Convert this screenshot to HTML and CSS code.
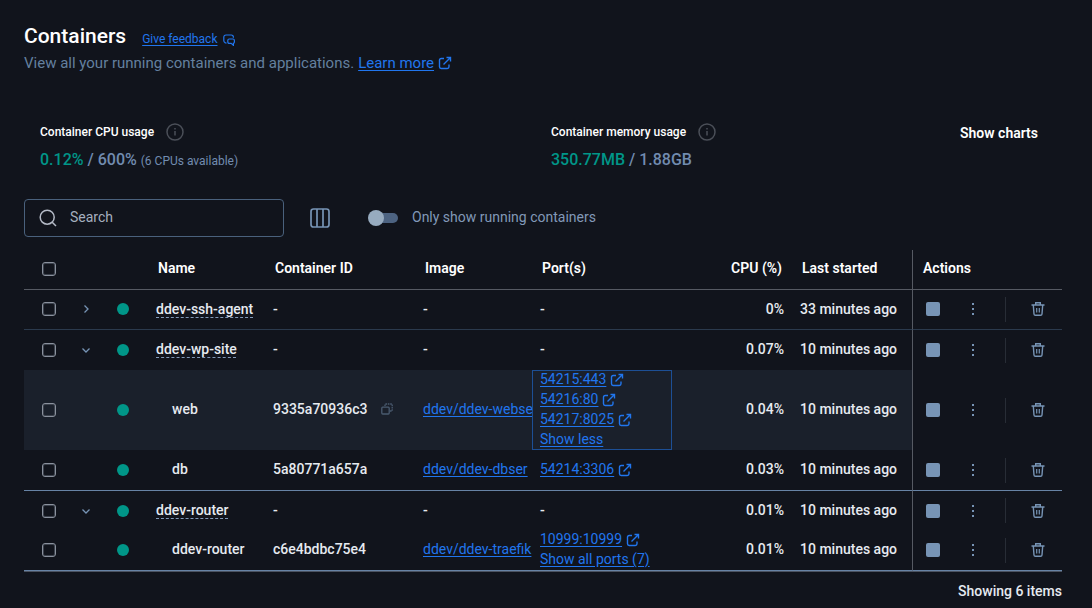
FILE: index.html
```
<!DOCTYPE html>
<html lang="en">
<head>
    <meta charset="UTF-8">
    <meta name="viewport" content="width=device-width, initial-scale=1.0">
    <title>Containers</title>
    <link rel="stylesheet" href="styles.css">
</head>
<body>
    <!-- Shared icons -->
    <svg class="icon-defs" aria-hidden="true">
        <symbol id="icon-external" viewBox="0 0 14 14">
            <path d="M6 2.5H3.2Q1.5 2.5 1.5 4.2V10.8Q1.5 12.5 3.2 12.5H9.3Q11 12.5 11 10.8V8.5M5.5 8.5L12 2M8.5 1.5H12.5V5.5" fill="none" stroke="currentColor" stroke-width="1.4"/>
        </symbol>
        <symbol id="icon-info" viewBox="0 0 18 18">
            <circle cx="9" cy="9" r="8" fill="none" stroke="currentColor" stroke-width="1.5"/>
            <path d="M9 8V12.5M9 5V6.5" stroke="currentColor" stroke-width="1.5"/>
        </symbol>
        <symbol id="icon-right" viewBox="0 0 10 10">
            <path d="M3.5 1.5L7 5L3.5 8.5" fill="none" stroke="currentColor" stroke-width="1.3"/>
        </symbol>
        <symbol id="icon-down" viewBox="0 0 10 10">
            <path d="M1.5 3.5L5 7L8.5 3.5" fill="none" stroke="currentColor" stroke-width="1.3"/>
        </symbol>
        <symbol id="icon-stop" viewBox="0 0 14 14">
            <rect width="14" height="14" rx="2" fill="currentColor"/>
        </symbol>
        <symbol id="icon-more" viewBox="0 0 14 14">
            <path d="M6 1h2v2H6zM6 6h2v2H6zM6 11h2v2H6z" fill="currentColor"/>
        </symbol>
        <symbol id="icon-trash" viewBox="0 0 14 14">
            <path d="M0.5 3H13.5M4.7 2.7V0.8H9.3V2.7M2.3 3L3 12Q3.1 13.3 4.4 13.3H9.6Q10.9 13.3 11 12L11.7 3" fill="none" stroke="currentColor" stroke-width="1.4"/>
            <path d="M5.7 6V10.5M8.3 6V10.5" stroke="currentColor" stroke-width="1.2"/>
        </symbol>
    </svg>

    <main class="page">
        <header class="page-header">
            <div class="title-row">
                <h1>Containers</h1>
                <a href="#" class="feedback">Give feedback</a>
                <svg class="icon-feedback" viewBox="0 0 12 12" aria-hidden="true">
                    <path d="M3.5 9.2L2 8.6Q0.8 8 0.8 6.5V3.2Q0.8 1 3 1H8.2Q10.4 1 10.4 3.2V3.8" fill="none" stroke="currentColor" stroke-width="1.2"/>
                    <path d="M6.2 5H10Q11.4 5 11.4 6.4V8Q11.4 9.1 10.4 9.3V11.4L8.2 9.4H6.2Q4.8 9.4 4.8 8V6.4Q4.8 5 6.2 5Z" fill="none" stroke="currentColor" stroke-width="1.2"/>
                </svg>
            </div>
            <p class="subtitle">View all your running containers and applications. <a href="#">Learn more</a><svg class="icon-link" aria-hidden="true"><use href="#icon-external"/></svg></p>
        </header>

        <!-- Usage summary -->
        <section class="stats">
            <div class="stat">
                <div class="stat-label">Container CPU usage <svg class="icon-info" aria-hidden="true"><use href="#icon-info"/></svg></div>
                <div class="stat-value"><span class="used">0.12%</span> / 600% <small>(6 CPUs available)</small></div>
            </div>
            <div class="stat">
                <div class="stat-label">Container memory usage <svg class="icon-info" aria-hidden="true"><use href="#icon-info"/></svg></div>
                <div class="stat-value"><span class="used">350.77MB</span> / 1.88GB</div>
            </div>
            <button type="button" class="show-charts">Show charts</button>
        </section>

        <!-- Toolbar -->
        <div class="toolbar">
            <div class="search">
                <svg class="icon-search" viewBox="0 0 18 18" aria-hidden="true">
                    <circle cx="8.2" cy="8.2" r="7" fill="none" stroke="currentColor" stroke-width="1.5"/>
                    <path d="M13.2 13.2L17 17" stroke="currentColor" stroke-width="1.5"/>
                </svg>
                <input type="text" placeholder="Search" aria-label="Search">
            </div>
            <button type="button" class="columns-button" aria-label="Columns">
                <svg viewBox="0 0 20 20" aria-hidden="true">
                    <path d="M3.5 1H16.5Q19 1 19 3.5V16.5Q19 19 16.5 19H3.5Q1 19 1 16.5V3.5Q1 1 3.5 1ZM7 1V19M13 1V19" fill="none" stroke="currentColor" stroke-width="1.7"/>
                </svg>
            </button>
            <label class="running-only"><input type="checkbox" role="switch" class="switch"> <span>Only show running containers</span></label>
        </div>

        <table class="containers">
            <colgroup>
                <col class="col-check">
                <col class="col-expand">
                <col class="col-status">
                <col class="col-name">
                <col class="col-id">
                <col class="col-image">
                <col class="col-ports">
                <col class="col-cpu">
                <col class="col-started">
                <col class="col-actions">
            </colgroup>
            <thead>
                <tr>
                    <th class="center"><input type="checkbox" class="check" aria-label="Select all"></th>
                    <th></th>
                    <th></th>
                    <th>Name</th>
                    <th>Container ID</th>
                    <th>Image</th>
                    <th>Port(s)</th>
                    <th class="cpu">CPU (%)</th>
                    <th>Last started</th>
                    <th class="actions-cell">Actions</th>
                </tr>
            </thead>
            <tbody>
                <tr class="line">
                    <td class="center"><input type="checkbox" class="check" aria-label="Select ddev-ssh-agent"></td>
                    <td class="center"><button type="button" class="expand" aria-label="Expand"><svg><use href="#icon-right"/></svg></button></td>
                    <td class="center"><span class="dot"></span></td>
                    <td><span class="group-name">ddev-ssh-agent</span></td>
                    <td>-</td>
                    <td>-</td>
                    <td>-</td>
                    <td class="cpu">0%</td>
                    <td>33 minutes ago</td>
                    <td class="actions-cell">
                        <div class="actions">
                            <button type="button" aria-label="Stop"><svg><use href="#icon-stop"/></svg></button>
                            <button type="button" aria-label="More"><svg><use href="#icon-more"/></svg></button>
                            <span class="divider"></span>
                            <button type="button" aria-label="Delete"><svg><use href="#icon-trash"/></svg></button>
                        </div>
                    </td>
                </tr>
                <tr>
                    <td class="center"><input type="checkbox" class="check" aria-label="Select ddev-wp-site"></td>
                    <td class="center"><button type="button" class="expand" aria-label="Collapse"><svg><use href="#icon-down"/></svg></button></td>
                    <td class="center"><span class="dot"></span></td>
                    <td><span class="group-name">ddev-wp-site</span></td>
                    <td>-</td>
                    <td>-</td>
                    <td>-</td>
                    <td class="cpu">0.07%</td>
                    <td>10 minutes ago</td>
                    <td class="actions-cell">
                        <div class="actions">
                            <button type="button" aria-label="Stop"><svg><use href="#icon-stop"/></svg></button>
                            <button type="button" aria-label="More"><svg><use href="#icon-more"/></svg></button>
                            <span class="divider"></span>
                            <button type="button" aria-label="Delete"><svg><use href="#icon-trash"/></svg></button>
                        </div>
                    </td>
                </tr>
                <tr class="hovered">
                    <td class="center"><input type="checkbox" class="check" aria-label="Select web"></td>
                    <td></td>
                    <td class="center"><span class="dot"></span></td>
                    <td class="child">web</td>
                    <td><span class="with-icon">9335a70936c3
                        <button type="button" class="copy" aria-label="Copy">
                            <svg viewBox="0 0 12 12" aria-hidden="true">
                                <path d="M1.7 4.2H7.3Q8.2 4.2 8.2 5.2V10Q8.2 11 7.3 11H1.7Q0.8 11 0.8 10V5.2Q0.8 4.2 1.7 4.2Z" fill="none" stroke="currentColor" stroke-width="1.3"/>
                                <path d="M4 3V1H11.2V8H9" fill="none" stroke="currentColor" stroke-width="1.3" stroke-dasharray="1.6 0.8"/>
                            </svg>
                        </button></span></td>
                    <td class="image"><a href="#">ddev/ddev-webse</a></td>
                    <td class="ports selected">
                        <div><a href="#">54215:443</a><svg class="icon-link"><use href="#icon-external"/></svg></div>
                        <div><a href="#">54216:80</a><svg class="icon-link"><use href="#icon-external"/></svg></div>
                        <div><a href="#">54217:8025</a><svg class="icon-link"><use href="#icon-external"/></svg></div>
                        <div><a href="#">Show less</a></div>
                    </td>
                    <td class="cpu">0.04%</td>
                    <td>10 minutes ago</td>
                    <td class="actions-cell">
                        <div class="actions">
                            <button type="button" aria-label="Stop"><svg><use href="#icon-stop"/></svg></button>
                            <button type="button" aria-label="More"><svg><use href="#icon-more"/></svg></button>
                            <span class="divider"></span>
                            <button type="button" aria-label="Delete"><svg><use href="#icon-trash"/></svg></button>
                        </div>
                    </td>
                </tr>
                <tr class="line-strong">
                    <td class="center"><input type="checkbox" class="check" aria-label="Select db"></td>
                    <td></td>
                    <td class="center"><span class="dot"></span></td>
                    <td class="child">db</td>
                    <td>5a80771a657a</td>
                    <td class="image"><a href="#">ddev/ddev-dbser</a></td>
                    <td class="ports"><div><a href="#">54214:3306</a><svg class="icon-link"><use href="#icon-external"/></svg></div></td>
                    <td class="cpu">0.03%</td>
                    <td>10 minutes ago</td>
                    <td class="actions-cell">
                        <div class="actions">
                            <button type="button" aria-label="Stop"><svg><use href="#icon-stop"/></svg></button>
                            <button type="button" aria-label="More"><svg><use href="#icon-more"/></svg></button>
                            <span class="divider"></span>
                            <button type="button" aria-label="Delete"><svg><use href="#icon-trash"/></svg></button>
                        </div>
                    </td>
                </tr>
                <tr class="after-line">
                    <td class="center"><input type="checkbox" class="check" aria-label="Select ddev-router group"></td>
                    <td class="center"><button type="button" class="expand" aria-label="Collapse"><svg><use href="#icon-down"/></svg></button></td>
                    <td class="center"><span class="dot"></span></td>
                    <td><span class="group-name">ddev-router</span></td>
                    <td>-</td>
                    <td>-</td>
                    <td>-</td>
                    <td class="cpu">0.01%</td>
                    <td>10 minutes ago</td>
                    <td class="actions-cell">
                        <div class="actions">
                            <button type="button" aria-label="Stop"><svg><use href="#icon-stop"/></svg></button>
                            <button type="button" aria-label="More"><svg><use href="#icon-more"/></svg></button>
                            <span class="divider"></span>
                            <button type="button" aria-label="Delete"><svg><use href="#icon-trash"/></svg></button>
                        </div>
                    </td>
                </tr>
                <tr class="line-strong">
                    <td class="center"><input type="checkbox" class="check" aria-label="Select ddev-router"></td>
                    <td></td>
                    <td class="center"><span class="dot"></span></td>
                    <td class="child">ddev-router</td>
                    <td>c6e4bdbc75e4</td>
                    <td class="image"><a href="#">ddev/ddev-traefik</a></td>
                    <td class="ports">
                        <div><a href="#">10999:10999</a><svg class="icon-link"><use href="#icon-external"/></svg></div>
                        <div><a href="#">Show all ports (7)</a></div>
                    </td>
                    <td class="cpu">0.01%</td>
                    <td>10 minutes ago</td>
                    <td class="actions-cell">
                        <div class="actions">
                            <button type="button" aria-label="Stop"><svg><use href="#icon-stop"/></svg></button>
                            <button type="button" aria-label="More"><svg><use href="#icon-more"/></svg></button>
                            <span class="divider"></span>
                            <button type="button" aria-label="Delete"><svg><use href="#icon-trash"/></svg></button>
                        </div>
                    </td>
                </tr>
            </tbody>
        </table>
        <footer class="table-footer">Showing 6 items</footer>
    </main>
</body>
</html>
```
FILE: styles.css
```
* {
    box-sizing: border-box;
}
body {
    margin: 0;
    background: #11141c;
    color: #e6eaf0;
    font-family: Roboto, "Liberation Sans", sans-serif;
    font-size: 14px;
    line-height: 20px;
}
a {
    color: #2176ee;
    text-decoration: underline;
    text-underline-offset: 2px;
}
button {
    padding: 0;
    border: 0;
    background: none;
    color: inherit;
    font: inherit;
    cursor: pointer;
}
svg {
    display: block;
}
.icon-defs {
    display: none;
}
.page {
    padding: 24px 30px 0 24px;
}
.title-row {
    display: flex;
    align-items: baseline;
}
h1 {
    margin: 0 16px 0 0;
    font-size: 21px;
    line-height: 24px;
    font-weight: 500;
    color: #fff;
}
.feedback {
    font-size: 12px;
}
.icon-feedback {
    align-self: flex-end;
    width: 12px;
    height: 12px;
    margin: 0 0 3px 6px;
    color: #2176ee;
}
.subtitle {
    display: flex;
    align-items: center;
    gap: 4px;
    margin: 4px 0 0;
    font-size: 15px;
    color: #64809f;
}
.icon-link {
    width: 14px;
    height: 14px;
    color: #2176ee;
}

/* Usage summary */
.stats {
    position: relative;
    display: grid;
    grid-template-columns: 1fr 1fr;
    margin-top: 48px;
    padding-left: 16px;
}
.stat-label {
    display: flex;
    align-items: center;
    gap: 12px;
    height: 22px;
    font-size: 12px;
    font-weight: 500;
    color: #fff;
}
.icon-info {
    width: 18px;
    height: 18px;
    color: #4b4f58;
}
.stat-value {
    margin-top: 7px;
    font-size: 16px;
    font-weight: 500;
    color: #718cb0;
}
.stat-value .used {
    color: #009688;
}
.stat-value small {
    font-size: 12px;
    font-weight: 400;
}
.show-charts {
    position: absolute;
    top: 2px;
    right: 24px;
    font-weight: 600;
    color: #fff;
}

/* Toolbar */
.toolbar {
    display: flex;
    align-items: center;
    margin-top: 28px;
}
.search {
    display: flex;
    align-items: center;
    gap: 13px;
    width: 260px;
    height: 38px;
    padding: 0 14px;
    border: 1px solid #4a617c;
    border-radius: 4px;
}
.icon-search {
    width: 18px;
    height: 18px;
    color: #b4bac6;
}
.search input {
    flex: 1;
    min-width: 0;
    padding: 0 0 2px;
    border: 0;
    outline: 0;
    background: none;
    color: #e6eaf0;
    font: inherit;
}
.search input::placeholder {
    color: #a5afbf;
    opacity: 1;
}
.columns-button {
    margin-left: 26px;
    color: #7794b5;
}
.columns-button svg {
    width: 20px;
    height: 20px;
}
.running-only {
    display: flex;
    align-items: center;
    gap: 14px;
    margin-left: 38px;
    color: #8299b8;
}
.running-only span {
    padding-bottom: 2px;
}
.switch {
    appearance: none;
    position: relative;
    width: 30px;
    height: 16px;
    margin: 0;
}
.switch::before {
    content: "";
    position: absolute;
    top: 3px;
    left: 2px;
    right: 0;
    height: 10px;
    border-radius: 5px;
    background: #4d6381;
}
.switch::after {
    content: "";
    position: absolute;
    top: 0;
    left: 0;
    width: 16px;
    height: 16px;
    border-radius: 50%;
    background: #97abbf;
}

/* Table */
.containers {
    width: 100%;
    margin-top: 13px;
    table-layout: fixed;
    border-collapse: separate;
    border-spacing: 0;
}
.col-check, .col-status {
    width: 50px;
}
.col-expand {
    width: 24px;
}
.col-id, .col-actions {
    width: 150px;
}
.col-image {
    width: 117px;
}
.col-ports {
    width: 140px;
}
.col-cpu, .col-started {
    width: 120px;
}
th, td {
    height: 40px;
    padding: 0 8px 2px;
    text-align: left;
    white-space: nowrap;
    font-weight: 500;
}
th {
    padding: 0 10px 3px;
    border-bottom: 1px solid #565a63;
    font-weight: 600;
    color: #fff;
}
.center {
    padding: 0;
    text-align: center;
}
th.center, .line .center {
    padding-bottom: 1px;
}
td.actions-cell {
    padding-bottom: 0;
}
.line td.actions-cell {
    padding-bottom: 1px;
}
.cpu {
    text-align: right;
}
.line td {
    border-bottom: 1px solid #2b3a4d;
}
.line-strong td {
    height: 41px;
    border-bottom: 1px solid #6783a5;
}
.after-line td {
    height: 39px;
}
.hovered td:not(.actions-cell) {
    background: #1a202b;
}
.check {
    appearance: none;
    display: block;
    width: 14px;
    height: 14px;
    margin: 0 auto;
    border: 1px solid #8a919d;
    border-radius: 3px;
    box-shadow: inset 0 0 0 1px #3c424d;
}
.expand {
    display: block;
    margin: 0 auto;
    color: #7794b5;
}
.expand svg {
    width: 10px;
    height: 10px;
}
.dot {
    display: block;
    width: 12px;
    height: 12px;
    margin: 0 auto;
    border-radius: 50%;
    background: #009688;
}
.group-name {
    text-decoration: underline dashed #8299b8 1px;
    text-underline-offset: 3px;
}
.child {
    padding-left: 24px;
}
.with-icon {
    display: flex;
    align-items: center;
    gap: 14px;
}
.copy {
    color: #4a5b70;
}
.copy svg {
    width: 12px;
    height: 12px;
}
.image {
    padding-right: 0;
    overflow: hidden;
    font-weight: 400;
}
td.ports {
    padding-bottom: 0;
    font-weight: 400;
}
.ports div {
    display: flex;
    gap: 4px;
    height: 20px;
    line-height: 18px;
}
.ports .icon-link {
    margin-top: 3px;
}
.selected {
    outline: 1px solid #1d4f95;
    outline-offset: -1px;
}
.actions-cell {
    border-left: 1px solid #565a63;
}
.actions {
    display: flex;
    align-items: center;
    gap: 16px;
    color: #7794b5;
}
.actions button {
    display: flex;
    justify-content: center;
    width: 24px;
}
.actions svg {
    width: 14px;
    height: 14px;
}
.divider {
    width: 1px;
    height: 25px;
    margin: 0 4px;
    background: #282d36;
}
.table-footer {
    padding: 9px 0;
    border-top: 1px solid #4b5361;
    text-align: right;
    font-weight: 500;
}
```
